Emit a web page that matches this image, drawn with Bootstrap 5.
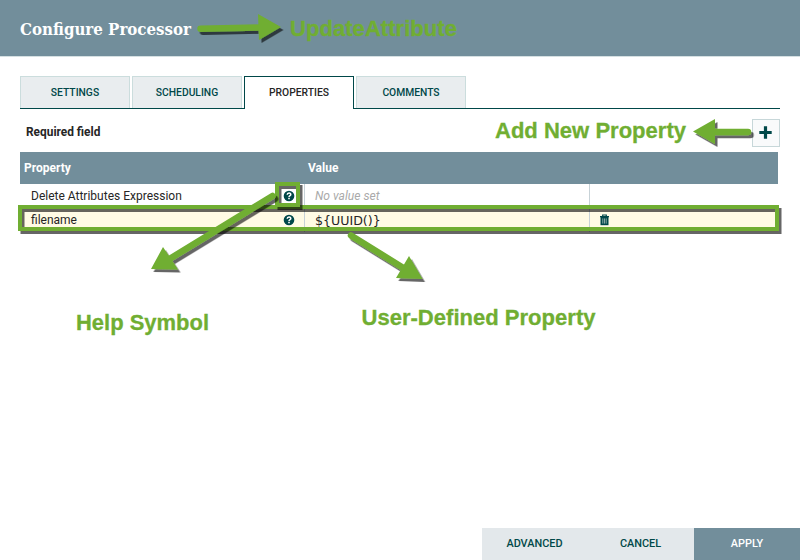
<!DOCTYPE html>
<html lang="en">
<head>
<meta charset="utf-8">
<meta name="viewport" content="width=device-width, initial-scale=1">
<title>Configure Processor</title>
<link href="https://cdn.jsdelivr.net/npm/bootstrap@5.3.0/dist/css/bootstrap.min.css" rel="stylesheet">
<style>
body{font-family:Roboto,sans-serif;font-size:12px;line-height:1;color:#262626;background:#fff;height:560px;overflow:hidden}
.dialog{height:560px}
.dlg-head{height:57px;background:#728e9b;border-bottom:1px solid #d5e0e2;padding:0 20px 0 20px}
.dlg-head h1{font-family:"Roboto Slab","DejaVu Serif",serif;font-size:17px;font-weight:700;color:#fff;line-height:1}
.dlg-body{padding:19px 20px 0}
.nav-tabs{gap:2px;border-bottom:1px solid #004849;height:33px;--bs-nav-tabs-border-radius:0}
.nav-tabs .nav-link{width:110px;height:32px;margin:0;padding:1px 0 0;font-size:10.3px;font-weight:500;color:#004849;background:#e9edef;border:1px solid #cbdddd;border-bottom:0;border-radius:0}
.nav-tabs .nav-link.active{height:33px;padding:0;background:#fff;color:#262626;border-color:#004849}
.tools{height:43px;padding-left:6px}
.tools strong{font-size:11.9px;font-weight:700}
.btn-add{width:28px;height:28px;border:1px solid #c7d7d9;border-radius:0;background:#f9fafb;padding:0 1px 0 0;margin-top:4px}
.props{width:758px}
.props-head{height:32px;background:#728e9b;color:#fff;font-weight:700}
.props-row{height:24px}
.c-name{width:285px;border-right:1px solid #c7d2d7;padding:0 9px 0 11px}
.c-value{width:285px;border-right:1px solid #c7d2d7;padding-left:10px}
.props-head .c-name{padding-left:4px;border:0}
.props-head .c-value{padding-left:3px;border:0}
.defined{background:#fffbe5}
.unset{color:#aaa;font-style:italic;font-size:12.1px}
.expr{font-family:"DejaVu Sans",sans-serif;font-size:12.6px;padding-top:2px}
.foot .btn{height:32px;border:0;border-radius:0;padding:1px 0 0;font-size:10.9px;font-weight:500;color:#004849;background:#e3e8eb}
.foot .btn.apply{background:#728e9b;color:#fff}
.notes{position:absolute;left:0;top:0;pointer-events:none}
.notes text{font-family:"Liberation Sans",Arial,sans-serif;font-weight:700;font-size:22.4px;stroke:#70ae32;stroke-width:.3px}
</style>
<script src="https://cdn.jsdelivr.net/npm/bootstrap@5.3.0/dist/js/bootstrap.bundle.min.js"></script>
</head>
<body>
<svg class="d-none">
<symbol id="help" viewBox="0 0 12 12"><circle cx="6" cy="6" r="5.3" fill="#004849"/><path d="M4.2 4.7C4.3 2.5 7.8 2.5 7.8 4.5C7.8 5.7 6 5.6 6 7" fill="none" stroke="#fff" stroke-width="1.5"/><path d="M5.2 7.7h1.6v1.5H5.2z" fill="#fff"/></symbol>
</svg>
<div class="dialog d-flex flex-column position-relative">
<header class="dlg-head d-flex align-items-center"><h1 class="m-0"><svg class="d-block" width="200" height="28"><text x="0" y="21" textLength="171" lengthAdjust="spacingAndGlyphs" fill="#fff">Configure Processor</text></svg></h1></header>
<main class="dlg-body flex-grow-1">
<ul class="nav nav-tabs">
<li class="nav-item"><a class="nav-link d-flex align-items-center justify-content-center" href="#">SETTINGS</a></li>
<li class="nav-item"><a class="nav-link d-flex align-items-center justify-content-center" href="#">SCHEDULING</a></li>
<li class="nav-item"><a class="nav-link active d-flex align-items-center justify-content-center" href="#">PROPERTIES</a></li>
<li class="nav-item"><a class="nav-link d-flex align-items-center justify-content-center" href="#">COMMENTS</a></li>
</ul>
<div class="tools d-flex align-items-center justify-content-between">
<strong class="mt-1">Required field</strong>
<button class="btn btn-add d-flex align-items-center justify-content-center" aria-label="Add property"><svg width="13" height="13"><path d="M6.500 .3v12.400M.3 6.500h12.400" stroke="#004849" stroke-width="3.2"/></svg></button>
</div>
<div class="props">
<div class="props-head d-flex align-items-center"><div class="c-name">Property</div><div class="c-value">Value</div></div>
<div class="props-row d-flex">
<div class="c-name d-flex align-items-center justify-content-between"><span>Delete Attributes Expression</span><svg width="12" height="12"><use href="#help"/></svg></div>
<div class="c-value d-flex align-items-center"><span class="unset">No value set</span></div>
</div>
<div class="props-row defined d-flex">
<div class="c-name d-flex align-items-center justify-content-between"><span>filename</span><svg width="12" height="12"><use href="#help"/></svg></div>
<div class="c-value d-flex align-items-center"><span class="expr">${UUID()}</span></div>
<div class="d-flex align-items-center ps-2 ms-0"><svg class="ms-0" width="14" height="12"><path d="M4.700 2V1h3.600v1M2 2.600h9" fill="none" stroke="#004849" stroke-width="1.2"/><path d="M2.500 3h8v8.200h-8z" fill="#004849"/><path d="M4.800 4.400v5.200M6.500 4.400v5.200M8.200 4.400v5.200" stroke="#a9bfb9" stroke-width=".8"/></svg></div>
</div>
</div>
</main>
<footer class="foot d-flex justify-content-end">
<button class="btn" style="width:105px">ADVANCED</button><button class="btn" style="width:107px">CANCEL</button><button class="btn apply" style="width:106px">APPLY</button>
</footer>
<svg class="notes" width="800" height="560">
<defs><filter id="shade" filterUnits="userSpaceOnUse" x="0" y="0" width="800" height="560"><feDropShadow dx="2.500" dy="3" stdDeviation=".7" flood-color="#000" flood-opacity=".6"/></filter></defs>
<g fill="none" stroke="#70ae32" stroke-width="4" filter="url(#shade)"><rect x="20" y="207" width="757" height="22"/></g>
<g fill="none" stroke="#70ae32" stroke-width="4" filter="url(#shade)"><rect x="277" y="184" width="21" height="21"/></g>
<g fill="#70ae32" stroke="#70ae32" stroke-linecap="round" filter="url(#shade)">
<path d="M200.500 28.800L262 27.500M748 132H712M272.500 196L167 260.500M351 235.500L405 269" stroke-width="6.500"/>
<path d="M258 14L281 27L259 40ZM693 131.500L715 119V144ZM151 269L163 247L178 269.500ZM409 256L422.500 279L396 278Z" stroke="none"/>
</g>
<g fill="#70ae32">
<text x="290" y="36" textLength="167" lengthAdjust="spacingAndGlyphs">UpdateAttribute</text>
<text x="495" y="138" textLength="191" lengthAdjust="spacingAndGlyphs">Add New Property</text>
<text x="76" y="330" textLength="133" lengthAdjust="spacingAndGlyphs">Help Symbol</text>
<text x="361.500" y="325" textLength="234" lengthAdjust="spacingAndGlyphs">User-Defined Property</text>
</g>
</svg>
</div>
</body>
</html>
